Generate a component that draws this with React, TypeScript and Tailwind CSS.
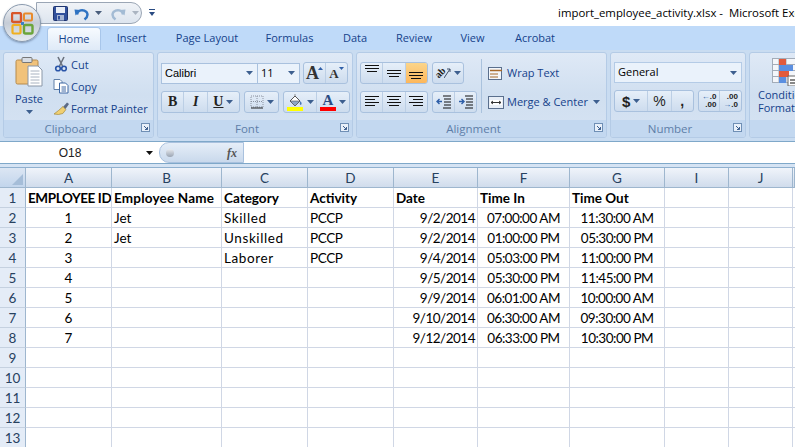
import type { ReactNode } from "react";

const UI_FONT = "font-['Open_Sans','Noto_Sans',sans-serif]";

const TABS = [
  { label: "Insert", width: "w-[61px]" },
  { label: "Page Layout", width: "w-[90px]" },
  { label: "Formulas", width: "w-[75px]" },
  { label: "Data", width: "w-[56px]" },
  { label: "Review", width: "w-[62px]" },
  { label: "View", width: "w-[55px]" },
  { label: "Acrobat", width: "w-[70px]" },
];

const COLUMNS = ["A", "B", "C", "D", "E", "F", "G", "I", "J", ""];

const ROWS: string[][] = [
  ["EMPLOYEE ID", "Employee Name", "Category", "Activity", "Date", "Time In", "Time Out"],
  ["1", "Jet", "Skilled", "PCCP", "9/2/2014", "07:00:00 AM", "11:30:00 AM"],
  ["2", "Jet", "Unskilled", "PCCP", "9/2/2014", "01:00:00 PM", "05:30:00 PM"],
  ["3", "", "Laborer", "PCCP", "9/4/2014", "05:03:00 PM", "11:00:00 PM"],
  ["4", "", "", "", "9/5/2014", "05:30:00 PM", "11:45:00 PM"],
  ["5", "", "", "", "9/9/2014", "06:01:00 AM", "10:00:00 AM"],
  ["6", "", "", "", "9/10/2014", "06:30:00 AM", "09:30:00 AM"],
  ["7", "", "", "", "9/12/2014", "06:33:00 PM", "10:30:00 PM"],
  [],
  [],
  [],
  [],
  [],
];

const GRID_COLS = "grid grid-cols-[26px_86px_110px_86px_86px_84px_92px_95px_64px_64px_2px]";

// Lato runs wider on digits and caps than Calibri, narrower on lower case
function cellTracking(r: number, c: number) {
  if (r === 0) {
    if (c === 0) return "tracking-[-0.4px]";
    if (c === 1) return "tracking-[0.2px]";
    return "";
  }
  if (c === 2) return "tracking-[0.6px]";
  if (c === 3) return "tracking-[-0.4px]";
  if (c >= 4) return "tracking-[-0.5px]";
  return "";
}

function Caret({ color = "#3d5f8f" }: { color?: string }) {
  return (
    <svg width="7" height="4" viewBox="0 0 7 4" className="shrink-0">
      <path d="M0 0h7L3.500 4z" fill={color} />
    </svg>
  );
}

function Launcher() {
  return (
    <svg width="9" height="9" viewBox="0 0 9 9" className="shrink-0">
      <rect x="0.500" y="0.500" width="8" height="8" fill="#e8f0fa" stroke="#6f8fb5" />
      <path d="M3 3l3.500 3.500M6.500 4v2.500H4" fill="none" stroke="#3d5f8f" />
    </svg>
  );
}

function Group({ label, width, launcher = true, children }: { label: string; width: string; launcher?: boolean; children: ReactNode }) {
  return (
    <div className={`${width} h-[86px] shrink-0 flex flex-col rounded-[3px] border border-[#b4cbe6] overflow-hidden bg-gradient-to-b from-[#dfe9f6] via-[#d0dff0] to-[#d6e3f3]`}>
      <div className="flex-1 min-h-0">{children}</div>
      <div className="h-[17px] bg-[#c3d8f0] relative flex items-center justify-center pr-[16px] text-[11.5px] leading-none text-[#5e7ea8]">
        {label}
        {launcher && (
          <span className="absolute right-[3px] top-[3px] flex">
            <Launcher />
          </span>
        )}
      </div>
    </div>
  );
}

function Cluster({ width, children }: { width: string; children: ReactNode }) {
  return (
    <div className={`${width} h-[22px] flex rounded-[3px] border border-[#a9c1de] bg-gradient-to-b from-[#e6eff9] to-[#cddcee] overflow-hidden divide-x divide-[#bccfe5]`}>
      {children}
    </div>
  );
}

function Btn({ width, active, children }: { width: string; active?: boolean; children: ReactNode }) {
  return (
    <div className={`${width} h-full flex items-center justify-center gap-[3px] ${active ? "bg-gradient-to-b from-[#fbd58a] to-[#fdb75a]" : ""}`}>
      {children}
    </div>
  );
}

function Lines({ w = 16, pattern }: { w?: number; pattern: [number, number][] }) {
  return (
    <svg width={w} height="14" viewBox={`0 0 ${w} 14`}>
      {pattern.map(([x, l], i) => (
        <rect key={i} x={x} y={i * 3 + 1} width={l} height="1" fill="#111" />
      ))}
    </svg>
  );
}

function PasteIcon() {
  return (
    <svg width="28" height="32" viewBox="0 0 28 32">
      <rect x="1" y="4" width="22" height="24" rx="1.500" fill="#f1c27a" stroke="#b58a4d" />
      <rect x="7" y="1.500" width="10" height="5" rx="1" fill="#d8dde4" stroke="#777" />
      <path d="M13 10h10l4 4v16H13z" fill="#fff" stroke="#8a97a8" />
      <path d="M15.500 15h9M15.500 18h9M15.500 21h9M15.500 24h9M15.500 27h9" stroke="#a8b2c0" />
    </svg>
  );
}

function CutIcon() {
  return (
    <svg width="16" height="16" viewBox="0 0 16 16">
      <path d="M5 1l4.500 9M11 1L6.500 10" stroke="#6d7480" strokeWidth="1.600" fill="none" />
      <circle cx="5" cy="12.500" r="2.300" fill="none" stroke="#2a55a8" strokeWidth="1.600" />
      <circle cx="11" cy="12.500" r="2.300" fill="none" stroke="#2a55a8" strokeWidth="1.600" />
    </svg>
  );
}

function CopyIcon() {
  return (
    <svg width="16" height="16" viewBox="0 0 16 16">
      <path d="M1 1.500h6l2 2v8H1z" fill="#fff" stroke="#5f7fa8" />
      <path d="M6.500 5h6l2.500 2.500v7.500h-8.500z" fill="#fff" stroke="#3f69a5" />
      <path d="M8.500 9h4.500M8.500 11h4.500M8.500 13h4.500" stroke="#3f69a5" />
    </svg>
  );
}

function PainterIcon() {
  return (
    <svg width="17" height="14" viewBox="0 0 17 14">
      <path d="M10 6l4-4.500 2 1.500-3.500 5z" fill="#5a6a86" />
      <path d="M10 5.500l2.800 3.200-3 3.800-4.300 1L1 13l4.500-3.500z" fill="#f0cf72" stroke="#a58a3a" strokeWidth="0.700" />
    </svg>
  );
}

function SmallAction({ icon, label }: { icon: ReactNode; label: string }) {
  return (
    <div className="h-[22px] flex items-center text-[#15428b] text-[11px] leading-none">
      <span className="w-[20px] flex justify-center">{icon}</span>
      <span>{label}</span>
    </div>
  );
}

function ClipboardGroup() {
  return (
    <Group label="Clipboard" width="w-[151px]">
      <div className="flex pl-[10px] pt-[3px]">
        <div className="w-[30px] flex flex-col items-center text-[11px] leading-none text-[#15428b]">
          <PasteIcon />
          <span className="mt-[5px]">Paste</span>
          <span className="mt-[6px]">
            <Caret />
          </span>
        </div>
        <div className="ml-[7px] flex flex-col -mt-[3px]">
          <SmallAction icon={<CutIcon />} label="Cut" />
          <SmallAction icon={<CopyIcon />} label="Copy" />
          <SmallAction icon={<PainterIcon />} label="Format Painter" />
        </div>
      </div>
    </Group>
  );
}

function FontGroup() {
  return (
    <Group label="Font" width="w-[196px]">
      <div className="flex flex-col gap-[7px] pl-[3px] pt-[9px]">
        <div className="flex items-center">
          <div className="w-[97px] h-[21px] bg-[#eaf2fb] border border-[#a9c1de] flex items-center justify-between px-[3px] pr-[4px] font-['Liberation_Sans',sans-serif] text-[11px] text-black">
            Calibri
            <Caret />
          </div>
          <div className="w-[43px] h-[21px] -ml-px bg-[#eaf2fb] border border-[#a9c1de] flex items-center justify-between px-[3px] pr-[4px] text-[11px] text-black">
            11
            <Caret />
          </div>
          <div className="ml-[3px]">
            <Cluster width="w-[45px]">
              <Btn width="w-[23px]">
                <span className="font-['Liberation_Serif',serif] font-bold text-[18px] leading-none text-[#333]">A</span>
                <svg width="5" height="3" viewBox="0 0 5 3" className="-mt-[10px] -ml-[4px]">
                  <path d="M0 3h5L2.500 0z" fill="#2f5fa8" />
                </svg>
              </Btn>
              <Btn width="w-[22px]">
                <span className="font-['Liberation_Serif',serif] font-bold text-[13px] leading-none text-[#333]">A</span>
                <svg width="5" height="3" viewBox="0 0 5 3" className="-mt-[10px] -ml-[3px]">
                  <path d="M0 0h5L2.500 3z" fill="#2f5fa8" />
                </svg>
              </Btn>
            </Cluster>
          </div>
        </div>
        <div className="flex items-center gap-[4px]">
          <Cluster width="w-[79px]">
            <Btn width="w-[23px]">
              <span className="font-['Liberation_Serif',serif] font-bold text-[14px] leading-none text-[#222]">B</span>
            </Btn>
            <Btn width="w-[24px]">
              <span className="font-['Liberation_Serif',serif] font-bold italic text-[14px] leading-none text-[#222]">I</span>
            </Btn>
            <Btn width="w-[32px]">
              <span className="font-['Liberation_Serif',serif] font-bold underline text-[14px] leading-none text-[#222]">U</span>
              <Caret />
            </Btn>
          </Cluster>
          <Cluster width="w-[35px]">
            <Btn width="w-[35px]">
              <svg width="14" height="14" viewBox="0 0 14 14">
                <path d="M1 1h12v11H1zM7 1v11M1 6.500h12" fill="none" stroke="#8b93a0" strokeDasharray="1 1" />
                <path d="M1 13h12" stroke="#222" strokeWidth="1.200" />
              </svg>
              <Caret />
            </Btn>
          </Cluster>
          <Cluster width="w-[67px]">
            <Btn width="w-[34px]">
              <svg width="17" height="17" viewBox="0 0 17 17">
                <path d="M3 7l5-5 5 5-5 5z" fill="#fff" stroke="#555" />
                <path d="M8 2V0M3 7h10l-5 5z" fill="#8fa6c4" stroke="#555" strokeWidth="0.600" />
                <path d="M13.500 7c1.500 2 1.500 3.500 0 4-1-.5-1-2 0-4z" fill="#4a76b8" />
                <rect x="0" y="13" width="16" height="4" fill="#ffff00" />
              </svg>
              <Caret />
            </Btn>
            <Btn width="w-[33px]">
              <span className="flex flex-col items-center">
                <span className="font-['Liberation_Serif',serif] font-bold text-[15px] leading-[13px] text-[#2a4b82]">A</span>
                <span className="w-[16px] h-[4px] bg-[#ff0000]" />
              </span>
              <Caret />
            </Btn>
          </Cluster>
        </div>
      </div>
    </Group>
  );
}

function AlignmentGroup() {
  return (
    <Group label="Alignment" width="w-[251px]">
      <div className="flex pl-[3px] pt-[9px]">
        <div className="w-[121px] flex flex-col gap-[7px]">
          <div className="flex gap-[4px]">
            <Cluster width="w-[68px]">
              <Btn width="w-[23px]">
                <span className="-mt-[5px] flex"><Lines pattern={[[1, 14], [1, 14], [3, 10]]} /></span>
              </Btn>
              <Btn width="w-[23px]">
                <Lines pattern={[[0, 0], [1, 14], [1, 14], [3, 10]]} />
              </Btn>
              <Btn width="w-[22px]" active>
                <span className="mt-[3px] flex"><Lines pattern={[[0, 0], [1, 14], [1, 14], [3, 10]]} /></span>
              </Btn>
            </Cluster>
            <Cluster width="w-[32px]">
              <Btn width="w-[32px]">
                <span className="flex items-center">
                  <span className="-rotate-45 font-['Liberation_Serif',serif] font-bold text-[10px] leading-none text-[#222]">ab</span>
                  <svg width="7" height="12" viewBox="0 0 7 12" className="-ml-[1px]">
                    <path d="M0 11L6 2M3 2h3v3" fill="none" stroke="#3f4f68" />
                  </svg>
                </span>
                <Caret />
              </Btn>
            </Cluster>
          </div>
          <div className="flex gap-[4px]">
            <Cluster width="w-[68px]">
              <Btn width="w-[23px]">
                <Lines pattern={[[1, 14], [1, 10], [1, 14], [1, 10]]} />
              </Btn>
              <Btn width="w-[23px]">
                <Lines pattern={[[1, 14], [3, 10], [1, 14], [3, 10]]} />
              </Btn>
              <Btn width="w-[22px]">
                <Lines pattern={[[1, 14], [5, 10], [1, 14], [5, 10]]} />
              </Btn>
            </Cluster>
            <Cluster width="w-[45px]">
              <Btn width="w-[23px]">
                <svg width="16" height="14" viewBox="0 0 16 14">
                  <path d="M1 6.500h5M3.500 4L1 6.500 3.500 9" fill="none" stroke="#2f5fa8" strokeWidth="1.400" />
                  <path d="M7 1h8M8 4h7M8 7h7M8 10h7M7 13h8" stroke="#111" />
                </svg>
              </Btn>
              <Btn width="w-[22px]">
                <svg width="16" height="14" viewBox="0 0 16 14">
                  <path d="M1 6.500h5M3.500 4L6 6.500 3.500 9" fill="none" stroke="#2f5fa8" strokeWidth="1.400" />
                  <path d="M7 1h8M8 4h7M8 7h7M8 10h7M7 13h8" stroke="#111" />
                </svg>
              </Btn>
            </Cluster>
          </div>
        </div>
        <div className="w-px h-[54px] -mt-[3px] bg-[#aac2dd]" />
        <div className="pl-[6px] flex flex-col gap-[7px] text-[11px] text-[#15428b]">
          <div className="h-[22px] flex items-center gap-[3px]">
            <svg width="16" height="15" viewBox="0 0 16 15">
              <rect x="0.500" y="1.500" width="13" height="12" fill="#f4f7fb" stroke="#5a6f8d" />
              <path d="M2 4.500h12" stroke="#a66a2c" strokeWidth="1.500" />
              <path d="M2 8h8M2 11h8" stroke="#a66a2c" />
            </svg>
            Wrap Text
          </div>
          <div className="h-[22px] flex items-center gap-[3px]">
            <svg width="16" height="13" viewBox="0 0 16 13">
              <rect x="0.500" y="0.500" width="15" height="12" fill="#e8eef6" stroke="#5a6f8d" />
              <rect x="2" y="4" width="12" height="5" fill="#fff" />
              <path d="M3 6.500h10M5 5l-2 1.500L5 8M11 5l2 1.500L11 8" fill="none" stroke="#333" />
            </svg>
            Merge &amp; Center
            <span className="ml-[2px]"><Caret /></span>
          </div>
        </div>
      </div>
    </Group>
  );
}

function NumberGroup() {
  return (
    <Group label="Number" width="w-[136px]">
      <div className="flex flex-col gap-[7px] pl-[3px] pt-[9px]">
        <div className="w-[128px] h-[21px] bg-[#eaf2fb] border border-[#b4cbe6] flex items-center justify-between px-[3px] pr-[4px] text-[11px] text-black">
          General
          <Caret />
        </div>
        <div className="flex gap-[4px]">
          <Cluster width="w-[80px]">
            <Btn width="w-[34px]">
              <span className="font-['Liberation_Sans',sans-serif] font-bold text-[15px] leading-none text-[#222]">$</span>
              <Caret />
            </Btn>
            <Btn width="w-[24px]">
              <span className="font-['Liberation_Sans',sans-serif] text-[14px] leading-none text-[#222]">%</span>
            </Btn>
            <Btn width="w-[22px]">
              <span className="font-['Liberation_Sans',sans-serif] font-bold text-[14px] leading-none text-[#222]">,</span>
            </Btn>
          </Cluster>
          <Cluster width="w-[44px]">
            <Btn width="w-[22px]">
              <span className="flex flex-col font-['Liberation_Sans',sans-serif] font-bold text-[8px] leading-[8px] text-[#222] text-right">
                <span><span className="text-[#2f5fa8]">←</span>.0</span>
                <span>.00</span>
              </span>
            </Btn>
            <Btn width="w-[22px]">
              <span className="flex flex-col font-['Liberation_Sans',sans-serif] font-bold text-[8px] leading-[8px] text-[#222] text-right">
                <span>.00</span>
                <span><span className="text-[#2f5fa8]">→</span>.0</span>
              </span>
            </Btn>
          </Cluster>
        </div>
      </div>
    </Group>
  );
}

function StylesGroup() {
  return (
    <Group label="" width="w-[60px]" launcher={false}>
      <div className="flex flex-col pt-[5px] pl-[8px] whitespace-nowrap text-[11px] leading-[13px] text-[#15428b]">
        <svg width="30" height="28" viewBox="0 0 30 28" className="ml-[14px]">
          <rect x="0.500" y="0.500" width="29" height="24" fill="#f4f6fa" stroke="#a3acb8" />
          <path d="M0 6.500h30M0 12.500h30M0 18.500h30M7 0v25M14 0v25" stroke="#a3acb8" />
          <rect x="7" y="1" width="7" height="6" fill="#e25a3c" />
          <rect x="7" y="7" width="14" height="6" fill="#5b8fe0" />
          <rect x="7" y="13" width="10" height="6" fill="#e25a3c" />
          <rect x="7" y="19" width="7" height="6" fill="#5b8fe0" />
          <rect x="16" y="18" width="11" height="10" fill="#fff" stroke="#666" />
          <path d="M18 22h6M18 25h6" stroke="#111" />
        </svg>
        <span className="mt-[2px]">Conditional</span>
        <span>Formatting</span>
      </div>
    </Group>
  );
}

function OfficeOrb() {
  return (
    <div className="absolute left-[3px] top-[4px] w-[38px] h-[38px] rounded-full border border-[#8a9aae] bg-gradient-to-b from-[#f3f5f8] via-[#c5ccd6] to-[#e6ebf0] flex items-center justify-center shadow-[0_1px_2px_rgba(60,80,110,0.5)]">
      <svg width="23" height="23" viewBox="0 0 23 23">
        <rect x="1" y="1" width="9" height="9" rx="1.500" fill="none" stroke="#d8562a" strokeWidth="2.400" />
        <rect x="13" y="1.500" width="8" height="7" rx="1" fill="none" stroke="#e88a2a" strokeWidth="2" />
        <rect x="1.500" y="13" width="8" height="8.500" rx="1" fill="none" stroke="#f0b020" strokeWidth="2.200" />
        <rect x="13" y="13" width="8.500" height="8.500" rx="1.500" fill="none" stroke="#6ba53a" strokeWidth="2.400" />
        <path d="M10 10h3v3h-3z" fill="#3b7fc8" />
      </svg>
    </div>
  );
}

function TitleBar() {
  return (
    <div className="h-[26px] bg-white flex items-center pl-[36px] whitespace-nowrap">
      <div className="w-[106px] h-[22px] flex items-center gap-[6px] pl-[16px] rounded-r-[11px] border border-[#9ba6b5] bg-gradient-to-b from-[#f0f3f7] to-[#dde5ef]">
        <svg width="15" height="15" viewBox="0 0 15 15">
          <rect x="0.500" y="0.500" width="14" height="14" rx="1" fill="#31509c" stroke="#1f3570" />
          <rect x="3" y="1" width="9" height="6" fill="#e9eef7" />
          <rect x="4" y="9" width="7" height="5.500" fill="#a7b6d4" />
          <rect x="5" y="10" width="2" height="3.500" fill="#31509c" />
        </svg>
        <svg width="15" height="15" viewBox="0 0 15 15">
          <path d="M3 8.500C3.500 4 9 3 12.500 6c1.500 2 1 5-2 7.500" fill="none" stroke="#2f73c2" strokeWidth="2.400" />
          <path d="M0.500 3.500l6 .5-5 5.500z" fill="#2f73c2" />
        </svg>
        <Caret color="#4a5e7c" />
        <svg width="15" height="15" viewBox="0 0 15 15" className="ml-[3px]">
          <path d="M12 8.500C11.500 4 6 3 2.500 6c-1.500 2-1 5 2 7.500" fill="none" stroke="#a3bbd4" strokeWidth="2.400" />
          <path d="M14.500 3.500l-6 .5 5 5.500z" fill="#a3bbd4" />
        </svg>
        <Caret color="#aab4c1" />
      </div>
      <svg width="7" height="8" viewBox="0 0 7 8" className="ml-[7px]">
        <path d="M0 0h6v1H0zM0 3h6L3 7z" fill="#2a4b82" />
      </svg>
      <div className={`${UI_FONT} ml-auto w-[237px] overflow-hidden text-[11.4px] text-black`}>
        import_employee_activity.xlsx&nbsp;-&nbsp; Microsoft Excel
      </div>
    </div>
  );
}

function TabStrip() {
  return (
    <div className="h-[24px] bg-[#bfdaf9] flex items-end pl-[47px] text-[11px] text-[#15428b] whitespace-nowrap">
      <div className="w-[54px] h-[23px] rounded-t-[4px] border border-b-0 border-[#a8c6ea] bg-gradient-to-b from-[#f7fbff] to-[#dfeaf7] flex items-center justify-center">
        Home
      </div>
      {TABS.map((tab) => (
        <div key={tab.label} className={`${tab.width} h-[23px] flex items-center justify-center`}>
          {tab.label}
        </div>
      ))}
    </div>
  );
}

function FormulaBar() {
  return (
    <div className="h-[26px] bg-[#d5e3f3] border-t border-[#7fa8c9]">
      <div className="h-[22px] bg-white border-b border-[#7fa8c9] flex items-center">
        <div className="w-[159px] flex items-center font-['Liberation_Sans',sans-serif] text-[12px] text-[#222]">
          <span className="w-[140px] text-center">O18</span>
          <span className="ml-[6px] flex"><Caret color="#111" /></span>
        </div>
        <div className="w-[85px] h-full rounded-l-[10px] border border-[#a9c1de] bg-gradient-to-b from-[#e6eef8] to-[#c9d9ec] flex items-center justify-between pl-[6px] pr-[6px]">
          <span className="w-[8px] h-[8px] rounded-full bg-gradient-to-b from-[#e8ebf0] to-[#9aa4b2]" />
          <span className="font-['Liberation_Serif',serif] italic font-bold text-[12px] text-[#555]">fx</span>
        </div>
        <div className="flex-1" />
      </div>
    </div>
  );
}

function Sheet() {
  return (
    <div className="border-t border-[#8fb0cf] font-['Lato',sans-serif] text-[13.5px] leading-none text-black">
      <div className={`${GRID_COLS} h-[20px]`}>
        <div className="bg-gradient-to-b from-[#dce6f3] to-[#c2d5ec] border-r border-b border-[#9eb6ce] flex items-end justify-end p-[2px]">
          <svg width="11" height="11" viewBox="0 0 11 11">
            <path d="M11 0v11H0z" fill="#a5bdd8" />
          </svg>
        </div>
        {COLUMNS.map((col, i) => (
          <div
            key={i}
            className="bg-gradient-to-b from-[#f0f4fa] to-[#d0dcec] border-r border-b border-[#9eb6ce] flex items-center justify-center pt-[2px] text-[#27415f]"
          >
            {col}
          </div>
        ))}
      </div>
      {ROWS.map((row, r) => (
        <div key={r} className={`${GRID_COLS} h-[20px]`}>
          <div className="bg-[#e4ecf7] border-r border-b border-r-[#9eb6ce] border-b-[#c5d1e0] flex items-center justify-center pt-[2px] text-[#27415f]">
            {r + 1}
          </div>
          {COLUMNS.map((_, c) => {
            const text = row[c] ?? "";
            const align = r === 0 ? "justify-start pl-[2px] font-bold" : c === 0 || c === 5 || c === 6 ? "justify-center" : c === 4 ? "justify-end pr-[2px]" : "justify-start pl-[2px]";
            return (
              <div key={c} className={`border-r border-b border-[#d0d7e5] flex items-center pt-[2px] whitespace-nowrap overflow-hidden ${align} ${cellTracking(r, c)}`}>
                {text}
              </div>
            );
          })}
        </div>
      ))}
    </div>
  );
}

export default function App() {
  return (
    <div className="relative w-[795px] h-[447px] overflow-hidden bg-white">
      <div className={UI_FONT}>
        <TitleBar />
        <TabStrip />
        <div className="h-[91px] bg-[#c9dcf1] flex gap-[3px] pl-[3px] pt-[2px] overflow-hidden">
          <ClipboardGroup />
          <FontGroup />
          <AlignmentGroup />
          <NumberGroup />
          <StylesGroup />
        </div>
      </div>
      <FormulaBar />
      <Sheet />
      <OfficeOrb />
    </div>
  );
}
